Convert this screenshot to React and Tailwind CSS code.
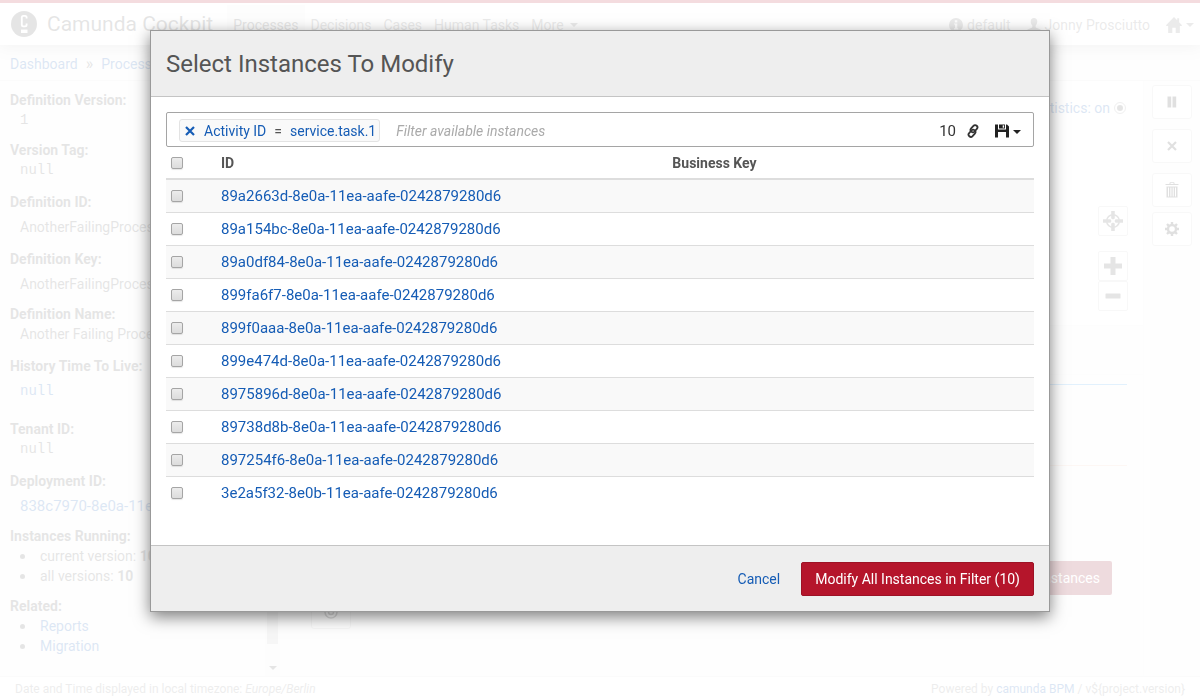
import React from "react";

const instances = [
  "89a2663d-8e0a-11ea-aafe-0242879280d6",
  "89a154bc-8e0a-11ea-aafe-0242879280d6",
  "89a0df84-8e0a-11ea-aafe-0242879280d6",
  "899fa6f7-8e0a-11ea-aafe-0242879280d6",
  "899f0aaa-8e0a-11ea-aafe-0242879280d6",
  "899e474d-8e0a-11ea-aafe-0242879280d6",
  "8975896d-8e0a-11ea-aafe-0242879280d6",
  "89738d8b-8e0a-11ea-aafe-0242879280d6",
  "897254f6-8e0a-11ea-aafe-0242879280d6",
  "3e2a5f32-8e0b-11ea-aafe-0242879280d6",
];

const mono = "font-['Liberation_Mono',monospace]";

const details = [
  { label: "Definition Version:", value: "1", valueClass: mono, gap: "mb-2.5" },
  { label: "Version Tag:", value: "null", valueClass: mono, gap: "mb-3" },
  { label: "Definition ID:", value: "AnotherFailingProcess:1:838f", valueClass: "mt-[5px]", gap: "mb-3" },
  { label: "Definition Key:", value: "AnotherFailingProcess", valueClass: "mt-[5px]", gap: "mb-2.5" },
  { label: "Definition Name:", value: "Another Failing Process", valueClass: "", gap: "mb-3" },
  { label: "History Time To Live:", value: "null", link: true, valueClass: "mt-[5px] " + mono, gap: "mb-[18px]" },
  { label: "Tenant ID:", value: "null", valueClass: mono, gap: "mb-3" },
  { label: "Deployment ID:", value: "838c7970-8e0a-11ea-aafe", link: true, valueClass: "mt-[5px] text-[15px]", gap: "mb-2.5" },
];

function Caret({ className = "" }) {
  return (
    <svg viewBox="0 0 8 4" width="8" height="4" fill="currentColor" className={className} aria-hidden="true">
      <path d="M0 0h8L4 4z" />
    </svg>
  );
}

function Icon({ size = 14, box = 14, className = "", children }) {
  return (
    <svg
      viewBox={`0 0 ${box} ${box}`}
      width={size}
      height={size}
      fill="currentColor"
      className={"shrink-0 " + className}
      aria-hidden="true"
    >
      {children}
    </svg>
  );
}

function Logo() {
  return (
    <Icon size={26} box={26}>
      <circle cx="13" cy="13" r="13" />
      <path
        d="M15.6 7.6V6.4a1.6 1.6 0 0 0-1.6-1.6h-1.6a1.6 1.6 0 0 0-1.6 1.6v7.4a1.6 1.6 0 0 0 1.6 1.6H14a1.6 1.6 0 0 0 1.6-1.6v-1.4"
        fill="none"
        stroke="#fff"
        strokeWidth="1.8"
      />
      <path d="M10 18.6h6.5V22H10z" fill="#fff" />
    </Icon>
  );
}

const InfoIcon = () => (
  <Icon>
    <path fillRule="evenodd" d="M7 0a7 7 0 1 1 0 14A7 7 0 0 1 7 0zM5.8 2.2v2.2h2.5V2.2zM5 5.4v1.2h1v3.6H5v1.3h4.2v-1.3H8.3V5.4z" />
  </Icon>
);

const UserIcon = () => (
  <Icon>
    <path d="M7 0c2 0 3.3 1.4 3.3 3.6 0 1.7-.7 3.2-1.7 4.100v1c0 .5.3.8.7 1l3.5 1.5c.7.3 1.2.8 1.2 1.6V14H0v-1.200c0-.8.5-1.3 1.2-1.6l3.5-1.5c.4-.2.7-.5.7-1v-1C4.4 6.800 3.7 5.300 3.7 3.600 3.7 1.400 5 0 7 0z" />
  </Icon>
);

const HomeIcon = () => (
  <Icon size={16}>
    <path d="M7 0l2.800 2.800V1.200h1.700v3.300L14 7.200l-.4.600h-1.500V14H8.500V9.500h-3V14H1.900V7.800H.4L0 7.200z" />
  </Icon>
);

const LinkIcon = () => (
  <Icon>
    <g fill="none" stroke="currentColor" strokeWidth="1.800">
      <rect x="5.700" y="0.700" width="4.600" height="8" rx="2.300" transform="rotate(42 8 4.700)" />
      <rect x="3.700" y="5.300" width="4.600" height="8" rx="2.300" transform="rotate(42 6 9.300)" />
    </g>
  </Icon>
);

const FloppyIcon = () => (
  <Icon>
    <path d="M0 .5h3v5h8v-5h1L14 2.500v11h-3V8H3v5.500H0z" />
    <path d="M4 .5h6v4H4z" />
    <path d="M7.700 1.300h1.400v2.400H7.700z" fill="#fff" />
  </Icon>
);

const PauseIcon = () => (
  <Icon>
    <path d="M2.500 1.500h3.700v11H2.500zM7.500 1.500h3.700v11H7.500z" />
  </Icon>
);

const CrossIcon = () => (
  <Icon>
    <path d="M3 3l8 8M11 3l-8 8" stroke="currentColor" strokeWidth="2.200" />
  </Icon>
);

const TrashIcon = () => (
  <Icon size={16} box={16}>
    <path fillRule="evenodd" d="M5.500 2V1c0-.5.3-.8.8-.8h3.400c.5 0 .8.300.8.800v1h4v1H1.500V2zM6.500 2h3V1h-3zM2.500 4.500h11v11h-11zM4 5.500v9h1v-9zm2.400 0v9h1v-9zm2.300 0v9h1v-9zM11 5.500v9h1v-9z" />
  </Icon>
);

const CogIcon = () => (
  <Icon>
    <g stroke="currentColor" fill="none" strokeWidth="2.400">
      <circle cx="7" cy="7" r="4" />
      <path d="M7 0v2.500M7 11.500V14M0 7h2.500M11.500 7H14M2 2l1.800 1.800M10.200 10.200L12 12M2 12l1.800-1.800M10.200 3.800L12 2" />
    </g>
  </Icon>
);

const TargetIcon = () => (
  <Icon size={20} box={20}>
    <circle cx="10" cy="10" r="6.300" fill="none" stroke="currentColor" strokeWidth="1.600" />
    <path d="M8.200 0h3.600v7.500L10 8.500l-1.800-1zM8.200 20h3.600v-7.500L10 11.500l-1.800 1zM0 8.200v3.600h7.500L8.500 10l-1-1.800zM20 8.200v3.600h-7.500L11.500 10l1-1.800z" />
  </Icon>
);

const PlusIcon = () => (
  <Icon size={18} box={18}>
    <path d="M6.500 0h5v6.500H18v5h-6.500V18h-5v-6.500H0v-5h6.500z" />
  </Icon>
);

const MinusIcon = () => (
  <Icon size={16} box={16}>
    <rect x="0.500" y="5.500" width="15" height="5" rx="0.500" />
  </Icon>
);

const EyeIcon = () => (
  <Icon>
    <circle cx="7" cy="7" r="6" fill="none" stroke="currentColor" strokeWidth="1.500" />
    <circle cx="7" cy="7" r="2.500" fill="none" stroke="currentColor" strokeWidth="1.500" />
  </Icon>
);

function ActionButton({ label, className = "", children }) {
  return (
    <button
      aria-label={label}
      className={"flex h-[34px] w-10 items-center justify-center rounded-[3px] border border-[#ccc] bg-white text-[#333] " + className}
    >
      {children}
    </button>
  );
}

function CanvasButton({ label, className = "", children }) {
  return (
    <button
      aria-label={label}
      className={"flex size-[30px] items-center justify-center rounded-[2px] border border-[#ccc] bg-white text-[#555] " + className}
    >
      {children}
    </button>
  );
}

function Check({ label }) {
  return (
    <input
      type="checkbox"
      aria-label={label}
      className="block size-3 appearance-none rounded-[2px] border border-[#a5a5a5] bg-linear-to-b from-[#ececec] to-[#dcdcdc] shadow-[0_1px_1px_rgba(0,0,0,0.1)]"
    />
  );
}

function Bullet({ children }) {
  return (
    <li className="flex items-center">
      <span className="mr-[15px] size-[5px] rounded-full bg-[#555]" />
      <span>{children}</span>
    </li>
  );
}

function Page() {
  return (
    <div className="flex min-h-screen flex-col bg-[#f4f4f4]">
      <header className="z-10 flex h-[45px] items-stretch border-t-[3px] border-[#b5152b] bg-white pr-1.5 pl-[11px] shadow-[0_1px_15px_rgba(0,0,0,0.3)]">
        <a href="#home" className="flex items-center gap-2.5 text-[21px]">
          <Logo />
          <span>Camunda Cockpit</span>
        </a>
        <nav className="ml-3.5 flex items-stretch pt-0.5 text-[#777]">
          <a href="#processes" className="flex items-center bg-[#eee] px-1.5 text-[#555]">Processes</a>
          <a href="#decisions" className="flex items-center px-1.5">Decisions</a>
          <a href="#cases" className="flex items-center px-1.5">Cases</a>
          <a href="#tasks" className="flex items-center px-1.5">Human Tasks</a>
          <button className="flex items-center gap-1.5 px-1.5">
            More
            <Caret />
          </button>
        </nav>
        <div className="ml-auto flex items-center gap-4 pt-0.5 text-[#777]">
          <span className="flex items-center gap-1">
            <InfoIcon />
            default
          </span>
          <a href="#user" className="flex items-center gap-1">
            <UserIcon />
            Jonny Prosciutto
          </a>
          <button aria-label="Applications" className="flex items-center gap-1">
            <HomeIcon />
            <Caret />
          </button>
        </div>
      </header>

      <div className="flex h-9 items-center gap-2 border-b border-[#e5e5e5] px-2.5 pt-0.5">
        <a href="#dashboard" className="text-[#155cb5]">Dashboard</a>
        <span className="text-base">»</span>
        <a href="#processes" className="text-[#155cb5]">Processes</a>
      </div>

      <div className="flex grow">
        <aside className="flex w-[280px] shrink-0">
          <div className="min-w-0 grow pt-[9px] pl-2.5">
            <dl>
              {details.map((d) => (
                <div key={d.label} className={d.gap}>
                  <dt className="font-bold">{d.label}</dt>
                  <dd className={"truncate pl-2.5 " + d.valueClass}>
                    {d.link ? <a href="#edit" className="text-[#155cb5]">{d.value}</a> : d.value}
                  </dd>
                </div>
              ))}
            </dl>
            <p className="font-bold">Instances Running:</p>
            <ul className="mb-2.5 pl-2.5">
              <Bullet>current version: <b>10</b></Bullet>
              <Bullet>all versions: <b>10</b></Bullet>
            </ul>
            <p className="font-bold">Related:</p>
            <ul className="pl-2.5">
              <Bullet><a href="#reports" className="text-[#155cb5]">Reports</a></Bullet>
              <Bullet><a href="#migration" className="text-[#155cb5]">Migration</a></Bullet>
            </ul>
          </div>
          <div className="flex w-[15px] flex-col items-center bg-[#eee] pb-1.5 text-[#555]">
            <div className="mb-[22px] w-[11px] grow bg-[#c4c4c4]" />
            <Caret />
          </div>
        </aside>

        <main className="flex min-w-0 grow flex-col">
          <section className="flex h-[244px] flex-col items-end bg-[#fbfbfb] pr-[15px]">
            <a href="#statistics" className="mt-[17px] mr-0.5 flex items-center gap-1 text-[#155cb5]">
              Statistics: on
              <Icon size={12} box={12} className="text-[#555]">
                <circle cx="6" cy="6" r="5.500" fill="none" stroke="currentColor" opacity="0.600" />
                <circle cx="6" cy="6" r="3" />
              </Icon>
            </a>
            <CanvasButton label="Reset view" className="mt-[88px]"><TargetIcon /></CanvasButton>
            <CanvasButton label="Zoom in" className="mt-[15px]"><PlusIcon /></CanvasButton>
            <CanvasButton label="Zoom out"><MinusIcon /></CanvasButton>
          </section>
          <div className="h-[50px] border-t border-b border-[#eee]" />
          <div className="mt-[9px] mr-4 ml-4 h-[82px] border-t border-b border-t-[#3c9ef0] border-b-[#f0c8b4]" />
          <div className="mr-[31px] ml-4 flex justify-end pt-[95px]">
            <button className="h-[34px] rounded-[2px] bg-[#8e1022] px-3 text-white">Modify Instances</button>
          </div>
          <div className="ml-[31px]">
            <ActionButton label="Show"><EyeIcon /></ActionButton>
          </div>
        </main>

        <aside className="flex w-[57px] shrink-0 flex-col items-center border-l border-[#eee] pt-1">
          <ActionButton label="Suspend" className="mb-2.5"><PauseIcon /></ActionButton>
          <ActionButton label="Cancel instances" className="mb-2.5"><CrossIcon /></ActionButton>
          <ActionButton label="Delete" className="mb-[5px]"><TrashIcon /></ActionButton>
          <ActionButton label="Settings"><CogIcon /></ActionButton>
        </aside>
      </div>

      <footer className="flex h-6 items-center justify-between border-t border-[#e5e5e5] bg-[#fafafa] px-[15px] text-xs text-[#888]">
        <span>Date and Time displayed in local timezone: <i>Europe/Berlin</i></span>
        <span>
          Powered by <a href="#camunda" className="text-[#155cb5]">camunda BPM</a> / {"v${project.version}"}
        </span>
      </footer>
    </div>
  );
}

function ModifyDialog() {
  return (
    <div
      role="dialog"
      aria-modal="true"
      aria-labelledby="dialog-title"
      className="mx-auto mt-[30px] w-full max-w-[900px] border border-[#999] bg-white shadow-[0_5px_15px_rgba(0,0,0,0.5)]"
    >
      <div className="flex h-[66px] items-center border-b border-[#c4c4c4] bg-[#eee] px-[15px]">
        <h1 id="dialog-title" className="text-2xl">Select Instances To Modify</h1>
      </div>

      <div className="px-[15px] pt-[15px] pb-9">
        <div className="flex h-[35px] items-center rounded-[2px] border border-[#a5a5a5] px-3 pt-0.5">
          <span className="flex h-[23px] items-center rounded-[3px] border border-[#e3e3e3] bg-[#f9f9f9] px-[3px] text-[#155cb5]">
            <button aria-label="Remove filter"><CrossIcon /></button>
            <button className="ml-[7px]">Activity ID</button>
            <span className="mx-2 text-[#555]">=</span>
            <button>service.task.1</button>
          </span>
          <input
            aria-label="Filter available instances"
            placeholder="Filter available instances"
            className="ml-4 min-w-0 grow bg-transparent italic outline-none placeholder:text-[#aaa]"
          />
          <span className="text-[15px] text-[#333]">10</span>
          <button aria-label="Copy link" className="ml-2.5 text-[#333]"><LinkIcon /></button>
          <button aria-label="Save filter" className="ml-[15px] flex items-center gap-1 text-[#222]">
            <FloppyIcon />
            <Caret className="mt-0.5" />
          </button>
        </div>

        <table className="w-full table-fixed border-collapse text-left">
          <thead>
            <tr className="h-8 border-b-2 border-[#ddd]">
              <th className="w-[50px] px-[5px]"><Check label="Select all" /></th>
              <th className="w-[52%] px-[5px]">ID</th>
              <th className="px-[5px]">Business Key</th>
            </tr>
          </thead>
          <tbody>
            {instances.map((id) => (
              <tr key={id} className="h-[33px] border-b border-[#ddd] last:border-b-0 odd:bg-[#f9f9f9]">
                <td className="px-[5px]"><Check label={"Select " + id} /></td>
                <td className="px-[5px] text-[15px]">
                  <a href={"#" + id} className="text-[#155cb5]">{id}</a>
                </td>
                <td />
              </tr>
            ))}
          </tbody>
        </table>
      </div>

      <div className="flex items-center justify-end border-t border-[#c4c4c4] bg-[#eee] px-[15px] pt-4 pb-[15px]">
        <button className="mr-[21px] text-[#155cb5]">Cancel</button>
        <button className="h-[34px] rounded-[2px] border border-[#9d1225] bg-[#b5152b] px-[13px] text-white">
          Modify All Instances in Filter (10)
        </button>
      </div>
    </div>
  );
}

export default function App() {
  return (
    <div className="font-[Roboto,'Liberation_Sans',sans-serif] text-[14px] leading-5 text-[#555]">
      <Page />
      <div className="fixed inset-0 z-20 overflow-y-auto bg-white/85">
        <ModifyDialog />
      </div>
    </div>
  );
}
